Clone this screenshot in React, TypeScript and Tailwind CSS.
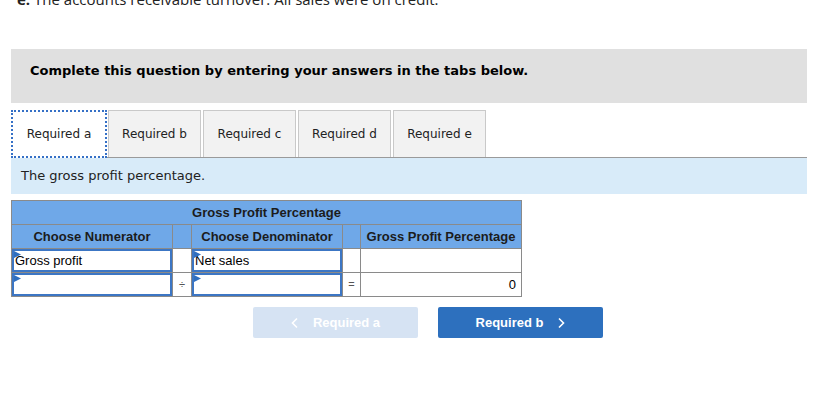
import React from 'react';

const tabs = ['Required a', 'Required b', 'Required c', 'Required d', 'Required e'];

const Flag: React.FC = () => (
    <svg className="absolute left-0 top-0" width="7" height="7" viewBox="0 0 7 7">
        <polygon points="0,0 7,3.5 0,7" fill="#2f6fc0" />
    </svg>
);

const InputCell: React.FC<{ value?: string }> = ({ value }) => (
    <div className="bg-white">
        <div className="relative h-full border-2 border-[#3c76c4] px-[1px] flex items-center text-[13px] text-black">
            <Flag />
            {value}
        </div>
    </div>
);

const App: React.FC = () => {
    return (
        <div className="w-[835px] h-[418px] bg-white overflow-hidden font-['Liberation_Sans',Arial,sans-serif]">
            {/* question text, clipped at the top */}
            <div className="h-[49px] overflow-hidden">
                <p className="-mt-[11px] pl-[17px] text-[15px] leading-[20px] text-[#222] font-['Open_Sans',sans-serif]">
                    <span className="font-bold">e.</span> The accounts receivable turnover. All sales were on credit.
                </p>
            </div>

            <div className="ml-[11px] w-[796px] h-[54px] bg-[#e0e0e0] pl-[19px] pt-[14px]">
                <p className="text-[13px] leading-[16px] font-bold text-black font-['DejaVu_Sans',Verdana,sans-serif]">
                    Complete this question by entering your answers in the tabs below.
                </p>
            </div>

            {/* tabs */}
            <div className="mt-[7px] ml-[11px] flex items-start h-[47px] font-['DejaVu_Sans',Verdana,sans-serif] text-[12px] text-[#222]">
                {tabs.map((t, i) =>
                    i === 0 ? (
                        <div
                            key={t}
                            className="relative z-10 w-[96px] h-[48px] bg-white border-2 border-dotted border-[#3570c6] flex items-center justify-center"
                        >
                            {t}
                        </div>
                    ) : (
                        <div
                            key={t}
                            className={`${i === 1 ? 'ml-[1px]' : 'ml-[2px]'} w-[93px] h-[47px] bg-[#f2f2f2] border border-b-0 border-[#c9c9c9] flex items-center justify-center`}
                        >
                            {t}
                        </div>
                    )
                )}
            </div>
            <div className="ml-[11px] w-[796px] h-[37px] bg-[#d8ebf9] border-t border-[#9a9a9a] pl-[10px] flex items-center font-['DejaVu_Sans',Verdana,sans-serif] text-[13px] text-[#222]">
                The gross profit percentage.
            </div>

            {/* table */}
            <div className="mt-[6px] ml-[11px] w-[511px] bg-[#8a8a8a] p-px grid grid-cols-[160px_18px_150px_17px_160px] grid-rows-[23px_23px_23px_23px] gap-px text-[13px] text-black">
                <div className="col-span-5 bg-[#6fa8e8] flex items-center justify-center font-bold text-[#1c1c1c]">Gross Profit Percentage</div>
                <div className="bg-[#6fa8e8] flex items-center justify-center font-bold text-[#1c1c1c]">Choose Numerator</div>
                <div className="bg-[#6fa8e8]" />
                <div className="bg-[#6fa8e8] flex items-center justify-center font-bold text-[#1c1c1c]">Choose Denominator</div>
                <div className="bg-[#6fa8e8]" />
                <div className="bg-[#6fa8e8] flex items-center justify-center font-bold text-[#1c1c1c]">Gross Profit Percentage</div>

                <InputCell value="Gross profit" />
                <div className="bg-white" />
                <InputCell value="Net sales" />
                <div className="bg-white" />
                <div className="bg-white" />

                <InputCell />
                <div className="bg-white flex items-center justify-center text-[11px] text-[#555]">÷</div>
                <InputCell />
                <div className="bg-white flex items-center justify-center text-[11px] text-[#555]">=</div>
                <div className="bg-white flex items-center justify-end pr-[5px]">0</div>
            </div>

            {/* nav buttons */}
            <div className="mt-[10px] flex text-[13px] font-bold text-white">
                <div className="ml-[253px] w-[165px] h-[31px] rounded-[2px] bg-[#d6e3f3] flex items-center justify-center gap-[14px]">
                    <svg width="8" height="12" viewBox="0 0 8 12"><polyline points="6,1.5 1.5,6 6,10.5" fill="none" stroke="white" strokeWidth="1.6" /></svg>
                    <span>Required a</span>
                </div>
                <div className="ml-[20px] w-[165px] h-[31px] rounded-[2px] bg-[#2d70be] flex items-center justify-center gap-[14px]">
                    <span>Required b</span>
                    <svg width="8" height="12" viewBox="0 0 8 12"><polyline points="2,1.5 6.5,6 2,10.5" fill="none" stroke="white" strokeWidth="1.6" /></svg>
                </div>
            </div>
        </div>
    );
};

export default App;
